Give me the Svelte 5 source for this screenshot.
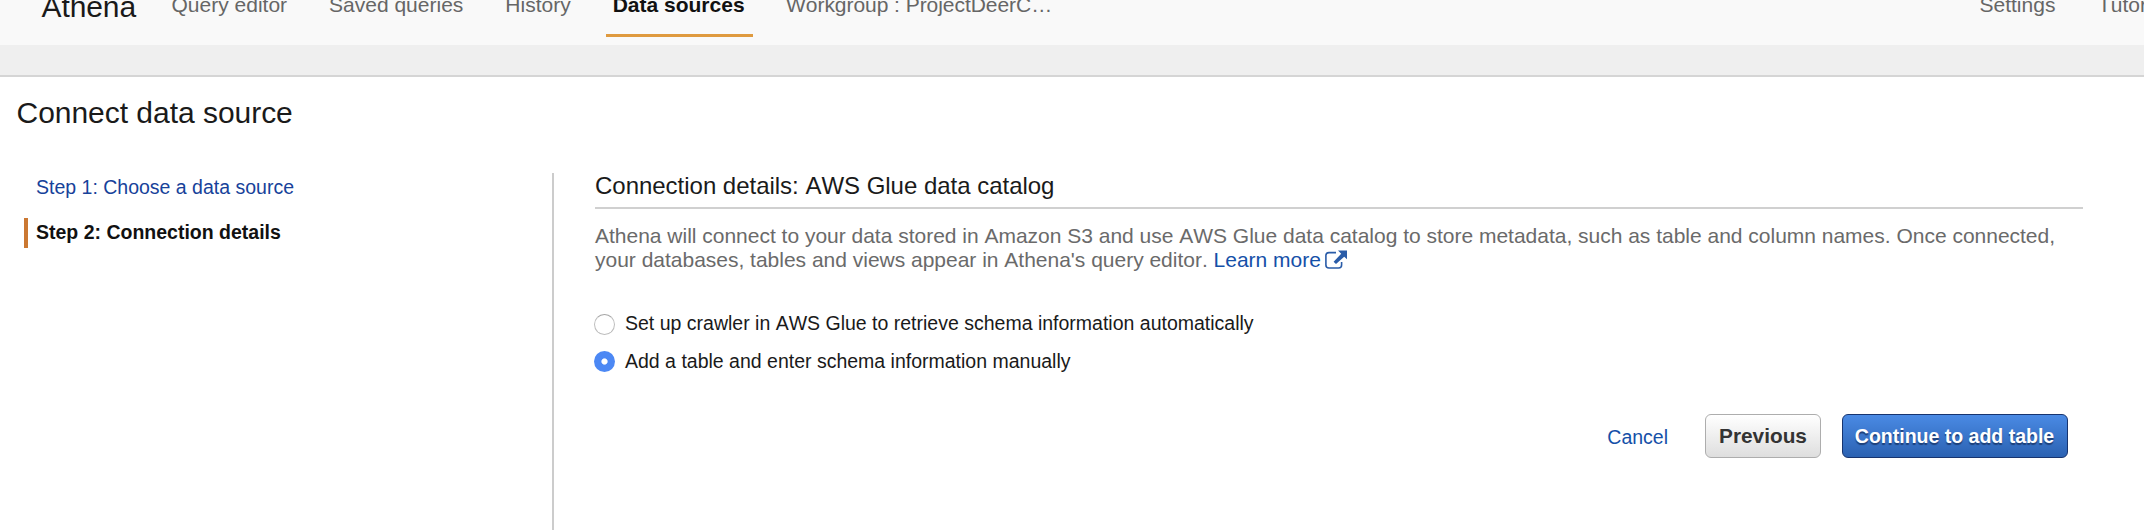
<script>
  const links = [
    { id: 'editor', label: 'Query editor' },
    { id: 'saved', label: 'Saved queries' },
    { id: 'history', label: 'History' },
    { id: 'sources', label: 'Data sources', active: true },
    { id: 'workgroup', label: 'Workgroup : ProjectDeerC…' }
  ];
  const options = [
    { id: 'crawler', label: 'Set up crawler in AWS Glue to retrieve schema information automatically' },
    { id: 'manual', label: 'Add a table and enter schema information manually' }
  ];
  let selected = $state('manual');
</script>

<div class="page">
  <header>
    <div class="brand">Athena</div>
    <nav>
      {#each links as link}
        <a class="{link.id}" class:active={link.active} href="#{link.id}">{link.label}</a>
      {/each}
    </nav>
    <div class="tools">
      <a href="#settings">Settings</a>
      <a href="#tutorial">Tutorial</a>
    </div>
  </header>
  <div class="band"></div>
  <h1>Connect data source</h1>
  <main>
    <ol class="steps">
      <li><a href="#step1">Step 1: Choose a data source</a></li>
      <li class="current">Step 2: Connection details</li>
    </ol>
    <section>
      <h2>Connection details: AWS Glue data catalog</h2>
      <p>
        <span>Athena will connect to your data stored in Amazon S3 and use AWS Glue data catalog to store metadata, such as table and column names. Once connected,</span><br />
        <span>your databases, tables and views appear in Athena's query editor. <a href="#learn">Learn more</a></span><svg class="ext" width="22" height="19" viewBox="0 0 22 19">
          <path d="M11 2.6H4Q.9 2.6 .9 5.6V15Q.9 18 4 18H13.6Q16.6 18 16.6 15V12" fill="none" stroke="#2a5ca8" stroke-width="1.6" />
          <path d="M13 .5H22V9.3L19.2 6.8L11 14L8.6 11.7L16.2 3.8Z" fill="#2a5ca8" />
        </svg>
      </p>
      <div class="options">
        {#each options as option}
          <label class={option.id}>
            <input type="radio" name="mode" value={option.id} bind:group={selected} />
            <span>{option.label}</span>
          </label>
        {/each}
      </div>
      <div class="actions">
        <a href="#cancel">Cancel</a>
        <button class="previous">Previous</button>
        <button class="primary">Continue to add table</button>
      </div>
    </section>
  </main>
</div>

<style>
  :global(body) { background: #fff; overflow: hidden; }
  .page {
    height: 530px;
    overflow: hidden;
    display: flex;
    flex-direction: column;
    font-family: "Liberation Sans", Arial, sans-serif;
    font-kerning: none;
    color: #1a1a1a;
    white-space: nowrap;
  }
  a { text-decoration: none; color: #1550a8; }
  header {
    height: 45px;
    flex: none;
    overflow: hidden;
    background: #f9f9f9;
    display: flex;
    padding-left: 41.5px;
  }
  .brand { font-size: 30px; line-height: 34px; margin-top: -10px; width: 130px; flex: none; letter-spacing: -0.1px; }
  nav, .tools { display: flex; font-size: 21px; line-height: 24px; height: 50px; margin-top: -6px; }
  nav a, .tools a { color: #666; margin-top: -1px; }
  nav .saved { margin-left: 42px; }
  nav .history { margin-left: 42px; }
  nav .sources {
    margin-left: 35px;
    padding: 0 8px 0 7px;
    height: 41px;
    border-bottom: 3px solid #df9a3f;
    font-weight: bold;
    color: #111;
  }
  nav .workgroup { margin-left: 33.5px; letter-spacing: -0.05px; }
  .tools { margin-left: auto; width: 164.5px; gap: 42.5px; flex: none; }
  .band { height: 30px; flex: none; background: #efefef; border-bottom: 2px solid #d5d5d5; }
  h1 { margin: 18px 0 0 16.5px; font-size: 30px; line-height: 36px; font-weight: normal; flex: none; letter-spacing: -0.03px; }
  main { display: flex; flex: 1; margin-top: 42px; }
  .steps {
    list-style: none;
    width: 554px;
    flex: none;
    margin: 0;
    padding: 0 0 0 24px;
    border-right: 2px solid #ccc;
    box-sizing: border-box;
    font-size: 19.5px;
  }
  .steps li { line-height: 29px; border-left: 4px solid transparent; padding-left: 8px; height: 30px; }
  .steps li:first-child { height: 28px; margin-bottom: 17px; line-height: 28px; }
  .steps li a { color: #17429a; }
  .steps .current { font-weight: bold; color: #111; border-left-color: #cb7832; }
  section { margin-left: 41px; width: 1488px; flex: none; }
  h2 { margin: 0; height: 34px; border-bottom: 2px solid #d0d0d0; font-size: 24px; line-height: 25px; font-weight: normal; letter-spacing: -0.02px; }
  p { margin: 15px 0 0; height: 48px; font-size: 21px; line-height: 24px; letter-spacing: -0.01px; color: #6a6a6a; }
  .ext { margin-left: 4px; vertical-align: -2px; }
  .options { margin-top: 40px; font-size: 19.5px; line-height: 22px; display: flex; flex-direction: column; gap: 16px; }
  label { display: flex; height: 22px; align-items: center; }
  input {
    appearance: none;
    box-sizing: border-box;
    width: 21px;
    height: 21px;
    margin: 2px 10px 0 -1px;
    border-radius: 50%;
    border: 1px solid #bdbdbd;
    border-top-color: #a5a5a5;
    background: #fff;
  }
  input:checked { border: 0; margin-top: 1px; background: radial-gradient(circle, #fff 2.6px, #4c88f4 3.6px); }
  .actions { display: flex; justify-content: flex-end; align-items: center; margin: 42px 15px 0 0; }
  .actions a { font-size: 19.5px; margin: 3px 37px 0 0; }
  button {
    height: 44px;
    box-sizing: border-box;
    padding: 0;
    border-radius: 6px;
    font-family: inherit;
    font-kerning: none;
    font-weight: bold;
  }
  .previous {
    width: 116px;
    margin-right: 21px;
    border: 1px solid #adadad;
    color: #333;
    font-size: 20.8px;
    background: linear-gradient(#fff, #dedede);
  }
  .primary {
    width: 226px;
    border: 1px solid #17346f;
    color: #fff;
    font-size: 19.5px;
    padding-right: 1px;
    text-shadow: 0 2px 1px #1d3f78;
    background: linear-gradient(#4a8ae4, #2b62b2);
  }
</style>
